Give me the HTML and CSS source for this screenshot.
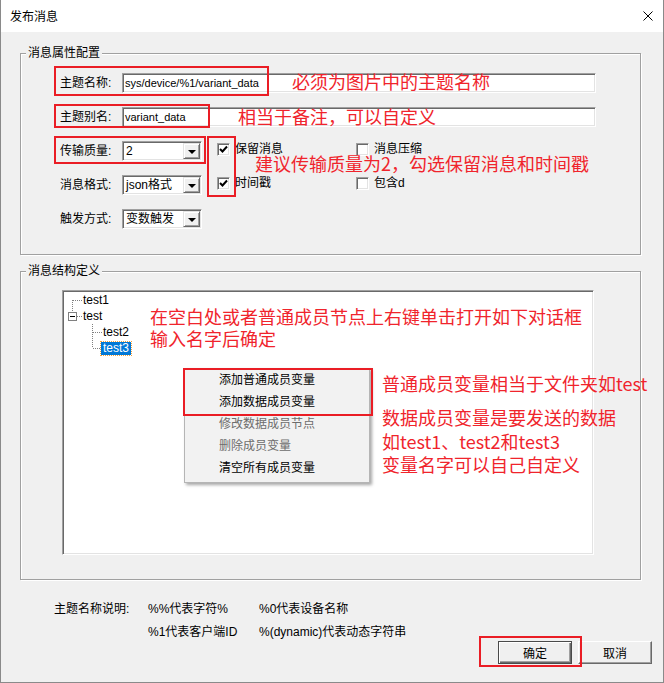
FILE: index.html
```html
<!DOCTYPE html>
<html>
<head>
<meta charset="utf-8">
<link rel="stylesheet" href="styles.css">
</head>
<body>
<div class="window">
  <div class="titlebar">
    <span class="title">发布消息</span>
    <svg class="close" width="10" height="10" viewBox="0 0 10 10"><path d="M0.5 0.5 L9.5 9.5 M9.5 0.5 L0.5 9.5" stroke="#000" stroke-width="1"/></svg>
  </div>
  <div class="body">
    <div class="group g1">
      <div class="legend">消息属性配置</div>
      <div class="form">
        <div class="row"><span class="lbl">主题名称:</span><div class="edit">sys/device/%1/variant_data</div></div>
        <div class="row"><span class="lbl">主题别名:</span><div class="edit">variant_data</div></div>
        <div class="row">
          <span class="lbl">传输质量:</span>
          <div class="combo"><span class="val">2</span><span class="drop"><i></i></span></div>
          <div class="checks">
            <span class="chk"><span class="box"><svg width="9" height="9" viewBox="0 0 9 9"><path d="M1 4 L3.5 6.5 L8 1.5" fill="none" stroke="#000" stroke-width="2"/></svg></span>保留消息</span>
            <span class="chk"><span class="box"></span>消息压缩</span>
          </div>
        </div>
        <div class="row">
          <span class="lbl">消息格式:</span>
          <div class="combo"><span class="val">json格式</span><span class="drop"><i></i></span></div>
          <div class="checks">
            <span class="chk"><span class="box"><svg width="9" height="9" viewBox="0 0 9 9"><path d="M1 4 L3.5 6.5 L8 1.5" fill="none" stroke="#000" stroke-width="2"/></svg></span>时间戳</span>
            <span class="chk"><span class="box"></span>包含d</span>
          </div>
        </div>
        <div class="row">
          <span class="lbl">触发方式:</span>
          <div class="combo"><span class="val">变数触发</span><span class="drop"><i></i></span></div>
        </div>
      </div>
    </div>
    <div class="group g2">
      <div class="legend">消息结构定义</div>
      <div class="tree-wrap">
        <div class="tree">
          <div class="node">
            <svg width="19" height="16" viewBox="0 0 19 16"><path d="M8.5 8 V16 M9 8.5 H18" stroke="#808080" stroke-dasharray="1 1" fill="none"/></svg>
            <span class="txt">test1</span>
          </div>
          <div class="node">
            <svg width="19" height="16" viewBox="0 0 19 16"><path d="M8.5 0 V4 M13 8.5 H18" stroke="#808080" stroke-dasharray="1 1" fill="none"/><rect x="4.5" y="4.5" width="8" height="8" fill="#fff" stroke="#808080"/><path d="M6 8.5 H11" stroke="#000"/></svg>
            <span class="txt">test</span>
          </div>
          <div class="node">
            <svg width="39" height="16" viewBox="0 0 39 16"><path d="M28.5 0 V16 M29 8.5 H38" stroke="#808080" stroke-dasharray="1 1" fill="none"/></svg>
            <span class="txt">test2</span>
          </div>
          <div class="node">
            <svg width="37" height="16" viewBox="0 0 37 16"><path d="M28.5 0 V8 M29 8.5 H36" stroke="#808080" stroke-dasharray="1 1" fill="none"/></svg>
            <span class="txt sel">test3</span>
          </div>
        </div>
      </div>
    </div>
    <div class="help">
      <span>主题名称说明:</span><span>%%代表字符%</span><span>%0代表设备名称</span>
      <span></span><span>%1代表客户端ID</span><span>%(dynamic)代表动态字符串</span>
    </div>
    <div class="buttons">
      <div class="btn default">确定</div>
      <div class="btn">取消</div>
    </div>
  </div>

  <div class="menu">
    <div class="item">添加普通成员变量</div>
    <div class="item">添加数据成员变量</div>
    <div class="item off">修改数据成员节点</div>
    <div class="item off">删除成员变量</div>
    <div class="item">清空所有成员变量</div>
  </div>

  <div class="rbox rb1"></div>
  <div class="rbox rb2"></div>
  <div class="rbox rb3"></div>
  <div class="rbox rb4"></div>
  <div class="rbox rb5"></div>
  <div class="rbox rb6"></div>

  <div class="note n1">必须为图片中的主题名称</div>
  <div class="note n2">相当于备注，可以自定义</div>
  <div class="note n3">建议传输质量为2，勾选保留消息和时间戳</div>
  <div class="note n4">在空白处或者普通成员节点上右键单击打开如下对话框<br>输入名字后确定</div>
  <div class="note n5">普通成员变量相当于文件夹如test</div>
  <div class="note n6">数据成员变量是要发送的数据<br>如test1、test2和test3<br>变量名字可以自己自定义</div>
</div>
</body>
</html>
```
FILE: styles.css
```css
body {
  margin: 0;
  background: #f0f0f0;
  font: 12px/16px "Liberation Sans", "Noto Sans CJK SC", sans-serif;
  color: #000;
}
.window {
  position: relative;
  width: 664px;
  height: 683px;
  box-sizing: border-box;
  border: 1px solid #8a8a8a;
  border-top: none;
  background: #f0f0f0;
  overflow: hidden;
}
.titlebar {
  height: 32px;
  background: #fff;
  display: flex;
  align-items: center;
  justify-content: space-between;
  padding: 0 9px 0 9px;
}
.title {
  font-family: "Noto Sans CJK SC", sans-serif;
  font-size: 12px;
}
.close { margin-right: 1px; }
.body {
  padding: 21px 22px 0 19px;
}
.group {
  border: 1px solid #a0a0a0;
  box-shadow: 1px 1px 0 #fff, inset 1px 1px 0 #fff;
}
.legend {
  width: max-content;
  margin: -9px 0 0 5px;
  padding: 0 2px;
  background: #f0f0f0;
  line-height: 16px;
}
.form {
  display: flex;
  flex-direction: column;
  gap: 14px;
  padding: 12px 0 25px 39px;
}
.row {
  display: flex;
  align-items: center;
  height: 20px;
}
.lbl { width: 62px; flex: none; }
.edit, .combo {
  height: 20px;
  box-sizing: border-box;
  background: #fff;
  border-top: 1px solid #a0a0a0;
  border-left: 1px solid #a0a0a0;
  border-right: 1px solid #fff;
  border-bottom: 1px solid #fff;
  box-shadow: inset 1px 1px 0 #696969, inset -1px -1px 0 #e3e3e3;
}
.edit {
  width: 474px;
  padding: 0 2px;
  line-height: 18px;
  font-size: 11px;
}
.combo {
  width: 80px;
  display: flex;
  align-items: center;
  justify-content: space-between;
  padding: 1px 1px 1px 2px;
}
.val { padding-left: 1px; line-height: 16px; }
.drop {
  width: 17px;
  height: 16px;
  box-sizing: border-box;
  background: #f0f0f0;
  border-top: 1px solid #e3e3e3;
  border-left: 1px solid #e3e3e3;
  border-right: 1px solid #696969;
  border-bottom: 1px solid #696969;
  box-shadow: inset 1px 1px 0 #fff, inset -1px -1px 0 #a0a0a0;
  display: flex;
  align-items: center;
  justify-content: center;
}
.drop i {
  width: 0;
  height: 0;
  border-left: 4px solid transparent;
  border-right: 4px solid transparent;
  border-top: 4px solid #000;
  margin-top: 1px;
}
.checks {
  display: flex;
  align-self: flex-start;
  margin: 2px 0 0 15px;
}
.chk {
  width: 139px;
  display: flex;
  align-items: center;
  height: 13px;
  line-height: 13px;
}
.box {
  width: 13px;
  height: 13px;
  box-sizing: border-box;
  background: #fff;
  border-top: 1px solid #a0a0a0;
  border-left: 1px solid #a0a0a0;
  border-right: 1px solid #fff;
  border-bottom: 1px solid #fff;
  box-shadow: inset 1px 1px 0 #696969, inset -1px -1px 0 #e3e3e3;
  margin-right: 5px;
  display: flex;
  align-items: center;
  justify-content: center;
}
.g2 { margin-top: 16px; }
.tree-wrap {
  padding: 11px 0 24px 41px;
}
.tree {
  width: 532px;
  height: 265px;
  box-sizing: border-box;
  background: #fff;
  border-top: 1px solid #a0a0a0;
  border-left: 1px solid #a0a0a0;
  border-right: 1px solid #fff;
  border-bottom: 1px solid #fff;
  box-shadow: inset 1px 1px 0 #696969, inset -1px -1px 0 #e3e3e3;
  padding: 1px 0 0 1px;
}
.node {
  display: flex;
  align-items: center;
  height: 16px;
}
.node svg { display: block; flex: none; }
.txt { line-height: 16px; }
.sel {
  background: #0078d7;
  color: #fff;
  padding: 0 2px;
  line-height: 13px;
  height: 13px;
  outline: 1px dotted #f3a03a;
}
.help {
  display: grid;
  grid-template-columns: 94px 111px auto;
  row-gap: 5px;
  margin: 20px 0 0 34px;
  line-height: 18px;
}
.buttons {
  display: flex;
  justify-content: flex-end;
  gap: 6px;
  margin-right: -11px;
}
.btn {
  width: 74px;
  height: 23px;
  box-sizing: border-box;
  background: #f0f0f0;
  border-top: 1px solid #fff;
  border-left: 1px solid #fff;
  border-right: 1px solid #696969;
  border-bottom: 1px solid #696969;
  box-shadow: inset -1px -1px 0 #a0a0a0;
  display: flex;
  align-items: center;
  justify-content: center;
  font-family: "Noto Sans CJK SC", sans-serif;
}
.btn.default {
  border: 1px solid #4a4a4a;
  box-shadow: inset 1px 1px 0 #fff, inset -1px -1px 0 #696969, inset -2px -2px 0 #a0a0a0;
}
.menu {
  position: absolute;
  left: 183px;
  top: 368px;
  width: 186px;
  height: 115px;
  box-sizing: border-box;
  background: #f2f2f2;
  border: 1px solid #b5b5b5;
  box-shadow: 2px 2px 3px rgba(0, 0, 0, 0.35);
  padding-top: 0;
}
.item {
  height: 22px;
  line-height: 22px;
  padding-left: 34px;
}
.item.off { color: #6d6d6d; }
.rbox {
  position: absolute;
  box-sizing: border-box;
  border: 2px solid #ea1d25;
}
.rb1 { left: 53px; top: 66px; width: 215px; height: 30px; }
.rb2 { left: 53px; top: 104px; width: 156px; height: 24px; }
.rb3 { left: 53px; top: 136px; width: 152px; height: 28px; }
.rb4 { left: 206px; top: 136px; width: 29px; height: 61px; }
.rb5 { left: 182px; top: 368px; width: 190px; height: 48px; }
.rb6 { left: 478px; top: 636px; width: 103px; height: 31px; }
.note {
  position: absolute;
  font-family: "Noto Sans CJK SC", sans-serif;
  font-size: 18px;
  line-height: 24px;
  color: #f0242c;
  white-space: nowrap;
}
.n1 { left: 291px; top: 69px; }
.n2 { left: 237px; top: 104px; }
.n3 { left: 254px; top: 151px; }
.n4 { left: 149px; top: 305px; line-height: 22px; }
.n5 { left: 381px; top: 371px; }
.n6 { left: 381px; top: 406px; line-height: 23.5px; }
```
